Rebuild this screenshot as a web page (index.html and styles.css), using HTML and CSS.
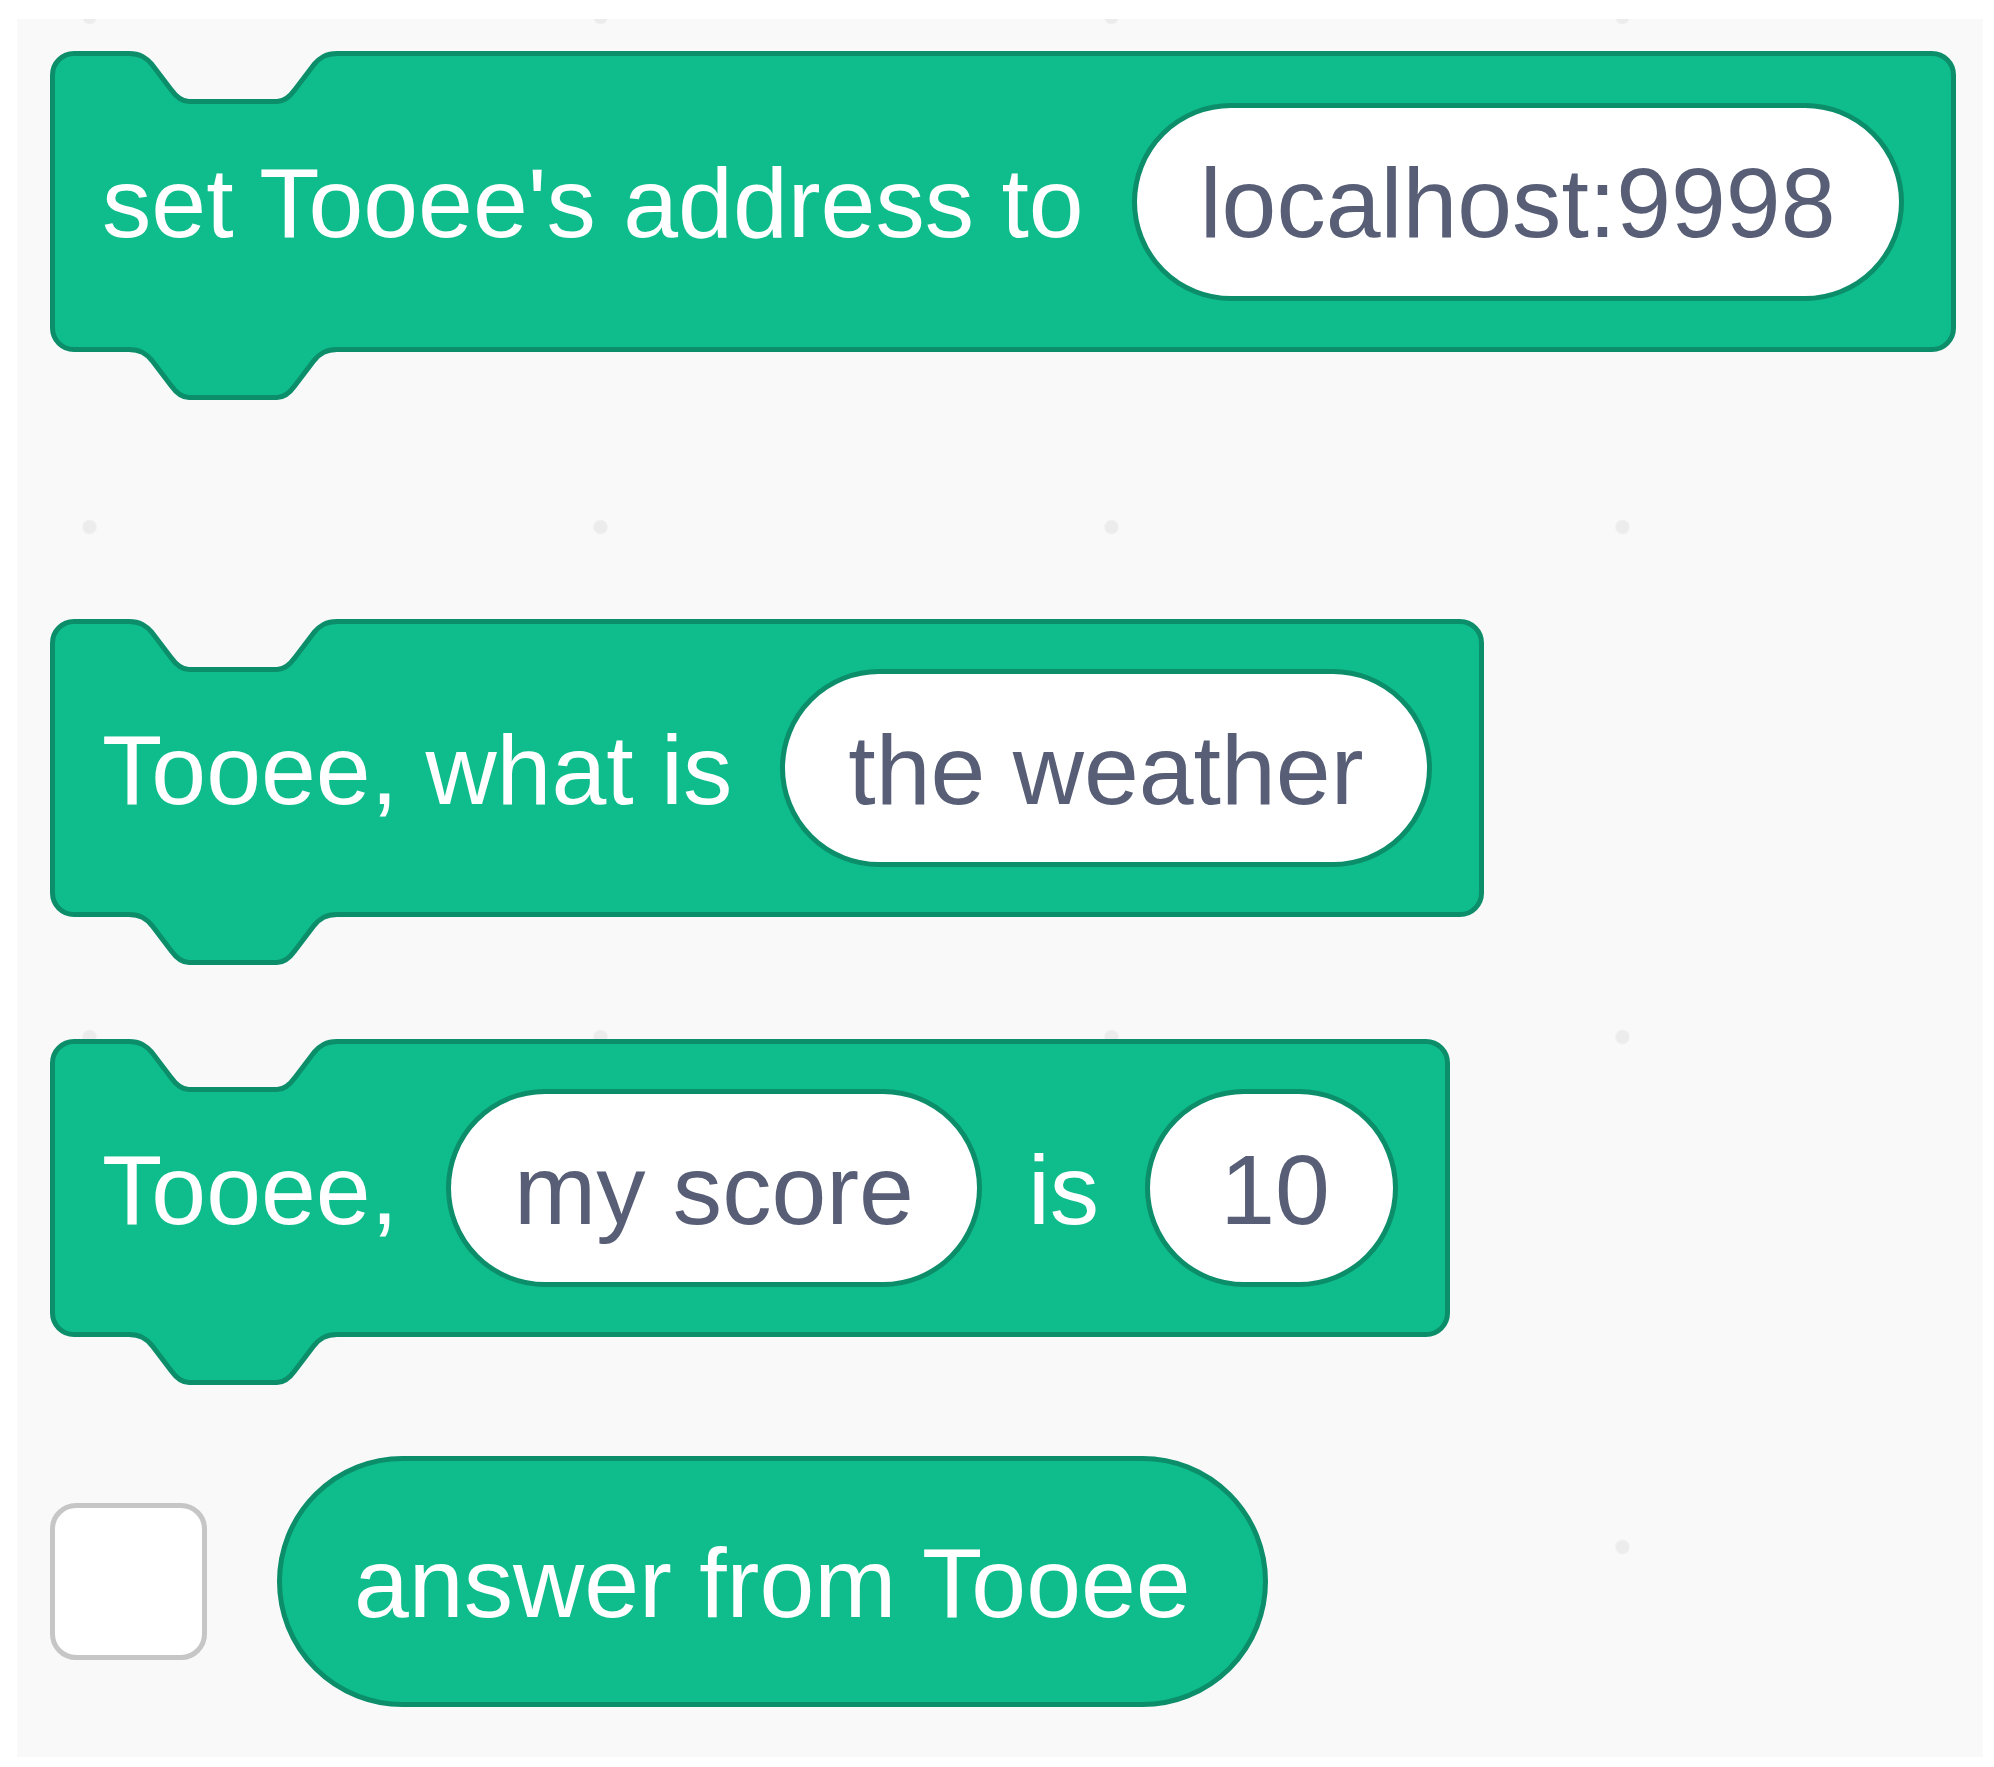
FILE: index.html
```html
<!DOCTYPE html>
<html lang="en">
<head>
<meta charset="utf-8">
<title>Tooee blocks</title>
<link rel="stylesheet" href="styles.css">
</head>
<body>
<div class="canvas">

  <div class="block block-first">
    <svg class="notch" width="300" height="60" viewBox="0 0 300 60" aria-hidden="true">
      <path class="notch-fill" d="M79,2.5 c11,0 17,4 23,11 l19,25 c5,7 10,12 18,12 h88 c8,0 13,-5 18,-12 l19,-25 c6,-7 12,-11 23,-11 L287,-2 L79,-2 Z"/>
      <path class="edge" d="M79,2.5 c11,0 17,4 23,11 l19,25 c5,7 10,12 18,12 h88 c8,0 13,-5 18,-12 l19,-25 c6,-7 12,-11 23,-11"/>
    </svg>
    <span class="label">set Tooee's address to</span>
    <span class="input">localhost:9998</span>
    <svg class="tab" width="300" height="60" viewBox="0 0 300 60" aria-hidden="true">
      <path class="tab-fill" d="M79,2.5 c11,0 17,4 23,11 l19,25 c5,7 10,12 18,12 h88 c8,0 13,-5 18,-12 l19,-25 c6,-7 12,-11 23,-11 L287,-3 L79,-3 Z"/>
      <path class="edge" d="M79,2.5 c11,0 17,4 23,11 l19,25 c5,7 10,12 18,12 h88 c8,0 13,-5 18,-12 l19,-25 c6,-7 12,-11 23,-11"/>
    </svg>
  </div>

  <div class="block block-far">
    <svg class="notch" width="300" height="60" viewBox="0 0 300 60" aria-hidden="true">
      <path class="notch-fill" d="M79,2.5 c11,0 17,4 23,11 l19,25 c5,7 10,12 18,12 h88 c8,0 13,-5 18,-12 l19,-25 c6,-7 12,-11 23,-11 L287,-2 L79,-2 Z"/>
      <path class="edge" d="M79,2.5 c11,0 17,4 23,11 l19,25 c5,7 10,12 18,12 h88 c8,0 13,-5 18,-12 l19,-25 c6,-7 12,-11 23,-11"/>
    </svg>
    <span class="label">Tooee, what is</span>
    <span class="input">the weather</span>
    <svg class="tab" width="300" height="60" viewBox="0 0 300 60" aria-hidden="true">
      <path class="tab-fill" d="M79,2.5 c11,0 17,4 23,11 l19,25 c5,7 10,12 18,12 h88 c8,0 13,-5 18,-12 l19,-25 c6,-7 12,-11 23,-11 L287,-3 L79,-3 Z"/>
      <path class="edge" d="M79,2.5 c11,0 17,4 23,11 l19,25 c5,7 10,12 18,12 h88 c8,0 13,-5 18,-12 l19,-25 c6,-7 12,-11 23,-11"/>
    </svg>
  </div>

  <div class="block block-near">
    <svg class="notch" width="300" height="60" viewBox="0 0 300 60" aria-hidden="true">
      <path class="notch-fill" d="M79,2.5 c11,0 17,4 23,11 l19,25 c5,7 10,12 18,12 h88 c8,0 13,-5 18,-12 l19,-25 c6,-7 12,-11 23,-11 L287,-2 L79,-2 Z"/>
      <path class="edge" d="M79,2.5 c11,0 17,4 23,11 l19,25 c5,7 10,12 18,12 h88 c8,0 13,-5 18,-12 l19,-25 c6,-7 12,-11 23,-11"/>
    </svg>
    <span class="label">Tooee,</span>
    <span class="input">my score</span>
    <span class="label label-mid">is</span>
    <span class="input input-num">10</span>
    <svg class="tab" width="300" height="60" viewBox="0 0 300 60" aria-hidden="true">
      <path class="tab-fill" d="M79,2.5 c11,0 17,4 23,11 l19,25 c5,7 10,12 18,12 h88 c8,0 13,-5 18,-12 l19,-25 c6,-7 12,-11 23,-11 L287,-3 L79,-3 Z"/>
      <path class="edge" d="M79,2.5 c11,0 17,4 23,11 l19,25 c5,7 10,12 18,12 h88 c8,0 13,-5 18,-12 l19,-25 c6,-7 12,-11 23,-11"/>
    </svg>
  </div>

  <div class="reporter-row">
    <span class="checkbox"></span>
    <span class="reporter">answer from Tooee</span>
  </div>

</div>
</body>
</html>
```

FILE: styles.css
```css
html, body {
  margin: 0;
  padding: 0;
  background: #ffffff;
}

body {
  font-family: "Liberation Sans", Arial, Helvetica, sans-serif;
}

.canvas {
  box-sizing: border-box;
  width: 1966px;
  height: 1738px;
  margin: 19px 0 0 17px;
  padding: 32px 0 0 33px;
  background-color: #f9f9f9;
  background-image: radial-gradient(circle, #ececec 0, #ececec 6px, rgba(236, 236, 236, 0) 8px);
  background-size: 511px 510px;
  background-position: -183px 253px;
  display: flex;
  flex-direction: column;
  align-items: flex-start;
}

.block {
  position: relative;
  box-sizing: border-box;
  height: 298px;
  display: inline-flex;
  align-items: center;
  gap: 48px;
  padding: 4px 47px 0 47px;
  background: #0fbd8c;
  border: 5px solid #0b8e69;
  border-radius: 24px;
}

.block-first {
  height: 301px;
}

.block-far {
  margin-top: 267px;
}

.block-near {
  margin-top: 122px;
}

.label {
  color: #ffffff;
  font-size: 98.6px;
  line-height: 1.12;
  white-space: pre;
}

.label-mid {
  margin: 0 -2px;
}

.input {
  box-sizing: border-box;
  height: 198px;
  margin-top: -4px;
  display: inline-flex;
  align-items: center;
  padding: 4px 63px 0 63px;
  background: #ffffff;
  border: 5px solid #0b8e69;
  border-radius: 99px;
  color: #575e75;
  font-size: 98.6px;
  line-height: 1.12;
  white-space: pre;
}

.input-num {
  padding-left: 70px;
}

.notch,
.tab {
  position: absolute;
  left: -5px;
  overflow: visible;
}

.notch {
  top: -5px;
}

.tab {
  top: 100%;
}

.notch-fill {
  fill: #f9f9f9;
}

.tab-fill {
  fill: #0fbd8c;
}

.edge {
  fill: none;
  stroke: #0b8e69;
  stroke-width: 5;
  stroke-linejoin: round;
  stroke-linecap: butt;
}

.reporter-row {
  margin-top: 119px;
  display: flex;
  align-items: center;
  gap: 70px;
}

.checkbox {
  box-sizing: border-box;
  width: 157px;
  height: 157px;
  background: #ffffff;
  border: 5px solid #c6c6c6;
  border-radius: 26px;
}

.reporter {
  box-sizing: border-box;
  height: 251px;
  display: inline-flex;
  align-items: center;
  padding: 4px 72px 0 72px;
  background: #0fbd8c;
  border: 5px solid #0b8e69;
  border-radius: 126px;
  color: #ffffff;
  font-size: 98.6px;
  line-height: 1.12;
  white-space: pre;
}
```
